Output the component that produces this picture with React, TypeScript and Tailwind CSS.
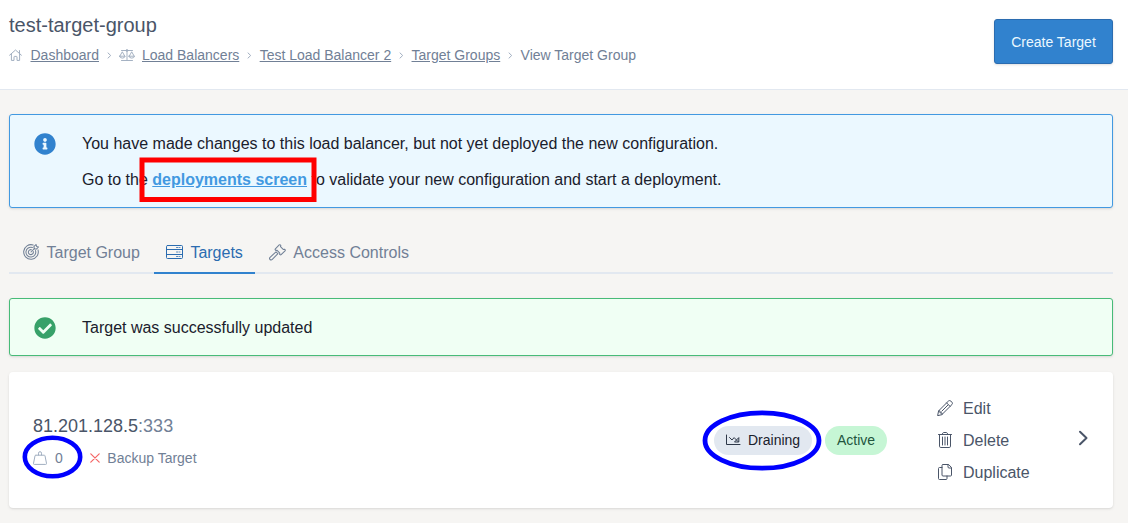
import type { ReactNode } from "react";
import { FaCheckCircle, FaInfoCircle } from "react-icons/fa";

type IconProps = { className: string; box?: string; width?: number; children: ReactNode };

function Icon({ className, box = "0 0 16 16", width = 1, children }: IconProps) {
  return (
    <svg
      className={`shrink-0 ${className}`}
      viewBox={box}
      fill="none"
      stroke="currentColor"
      strokeWidth={width}
      strokeLinecap="round"
      strokeLinejoin="round"
    >
      {children}
    </svg>
  );
}

function HomeIcon() {
  return (
    <Icon className="h-3 w-[13px] text-[#a0aec0]" box="0 0 13 12" width={1}>
      <path d="M.6 6.2 6.5 1l5.9 5.2M2.400 5v6.4h2.600V8q0-.6.6-.6h1.800q.6 0 .6.6v3.4h2.600V5M10.500 4.200V1.600" />
    </Icon>
  );
}

function ScaleIcon() {
  return (
    <Icon className="h-3 w-4 text-[#a0aec0]" box="0 0 16 12" width={0.95}>
      <path d="M2.500 1.500H13.500M8 .5v11M2.500 11.500h11M.8 7.200l2.500-4.400 2.500 4.400M10.200 7.200l2.500-4.400 2.500 4.400M.5 7.200h5.600q-.4 1.900-2.800 1.900T.5 7.200M9.900 7.200h5.600q-.4 1.900-2.800 1.900t-2.800-1.900" />
      <circle cx="8" cy="1.600" r=".9" />
    </Icon>
  );
}

function Crumb({ children }: { children: ReactNode }) {
  return (
    <>
      <a href="#" className="underline">{children}</a>
      <Icon className="ml-[7.500px] mr-[7.850px] mt-[2px] h-[7px] w-[5px] text-[#a0aec0]" box="0 0 5 7" width={1}>
        <path d="m1 .9 2.700 2.600L1 6.100" />
      </Icon>
    </>
  );
}

function TargetIcon() {
  return (
    <Icon className="h-4 w-4" width={1.05}>
      <path d="M10.200 1A7.300 7.300 0 1 0 15 5.900M9.400 3.500A4.900 4.900 0 1 0 12.500 6.600M8.400 5.700A2.500 2.500 0 1 0 10.300 7.600M8 8l3.600-3.600M11.200 4.800l-.3-2.200L13 .5l.6 1.900 1.900.6-2.100 2.100z" />
    </Icon>
  );
}

function ServerIcon() {
  return (
    <Icon className="h-4 w-[17px]" box="0 0 17 16">
      <rect x=".5" y="1.500" width="16" height="13" rx="1" />
      <path d="M.5 5.500h16M.5 10.500h16" />
      <path d="M10.500 3.500h1.600M13.500 3.500h.5M10.500 8h1.600M13.500 8h.5M10.500 12.500h1.600M13.500 12.500h.5" strokeWidth={0.8} />
    </Icon>
  );
}

function GavelIcon() {
  return (
    <Icon className="h-[17px] w-[17px]" width={1}>
      <path d="m6 4.600 3.600-3.700q.5-.5 1 0l.5.5-.3 1 2.800 2.800 1-.3.5.5q.5.500 0 1l-3.700 3.700q-.5.500-1 0l-.5-.5.300-1-2.800-2.800-1 .3-.4-.5q-.5-.5 0-1M7.600 8.400l-1-1L1 12.500q-1 1-.1 2.100 1.200 1 2.200-.1l5.300-5.400z" />
    </Icon>
  );
}

function Tab({ icon, label, active = false }: { icon: ReactNode; label: string; active?: boolean }) {
  return (
    <a
      href="#"
      className={`flex h-[42px] items-center border-b-2 pt-[2px] ${
        active ? "border-[#3182ce] px-3 text-[#2b6cb0]" : "border-[#e2e8f0] px-[14px] text-[#718096]"
      }`}
    >
      <span className="-mt-[2px]">{icon}</span>
      <span className="ml-[7.500px]">{label}</span>
    </a>
  );
}

function Action({ icon, label }: { icon: ReactNode; label: string }) {
  return (
    <a href="#" className="flex h-8 items-center">
      <span className="-mt-[2px] flex w-4 justify-center">{icon}</span>
      <span className="ml-[10px]">{label}</span>
    </a>
  );
}

export default function App() {
  return (
    <div className="relative h-[523px] overflow-hidden bg-[#f6f5f3] font-['Liberation_Sans',Arial,sans-serif] text-base text-[#1a202c]">
      <header className="flex h-[90px] items-start justify-between border-b border-[#e2e8f0] bg-white pl-[9px] pr-[15px]">
        <div>
          <h1 className="mt-[10px] text-xl leading-[30px] text-[#4a5568]">test-target-group</h1>
          <nav className="mt-1 flex h-[21px] items-center whitespace-nowrap text-sm text-[#718096]">
            <HomeIcon />
            <span className="w-[8.500px]" />
            <Crumb>Dashboard</Crumb>
            <span className="-ml-[0.350px]" />
            <ScaleIcon />
            <span className="w-[7px]" />
            <Crumb>Load Balancers</Crumb>
            <Crumb>Test Load Balancer 2</Crumb>
            <Crumb>Target Groups</Crumb>
            <span>View Target Group</span>
          </nav>
        </div>
        <button className="mt-[19px] h-[45px] w-[119px] rounded-[3px] border border-[#2b6cb0] bg-[#3182ce] text-sm text-[#ebf8ff] shadow-sm">
          Create Target
        </button>
      </header>

      <main className="pl-[9px] pr-[15px]">
        <section className="mt-6 flex h-[94px] rounded-[3px] border border-[#4299e1] bg-[#ebf8ff] pl-6 pt-[17px] shadow">
          <FaInfoCircle className="mt-[1px] h-[22px] w-[22px] shrink-0 text-[#3182ce]" />
          <div className="ml-[26px]">
            <p className="leading-6">You have made changes to this load balancer, but not yet deployed the new configuration.</p>
            <p className="mt-3 leading-6">
              Go to the{" "}
              <span className="relative">
                <a href="#" className="font-bold text-[#4299e1] underline">deployments screen</a>
                <svg className="pointer-events-none absolute -left-[13px] -top-[14px] h-[46px] w-[178px]" viewBox="0 0 178 46" fill="none">
                  <rect x="3" y="3" width="172" height="39.500" stroke="#ff0000" strokeWidth="5" />
                </svg>
              </span>{" "}
              to validate your new configuration and start a deployment.
            </p>
          </div>
        </section>

        <nav className="mt-6 flex h-[42px]">
          <Tab icon={<TargetIcon />} label="Target Group" />
          <Tab active icon={<ServerIcon />} label="Targets" />
          <Tab icon={<GavelIcon />} label="Access Controls" />
          <span className="flex-1 border-b-2 border-[#e2e8f0]" />
        </nav>

        <section className="mt-6 flex h-[58px] items-center rounded-[3px] border border-[#48bb78] bg-[#f0fff4] pl-6 pt-[2px] shadow">
          <FaCheckCircle className="h-[22px] w-[22px] shrink-0 text-[#38a169]" />
          <p className="ml-[26px]">Target was successfully updated</p>
        </section>

        <section className="mt-4 flex h-[136px] items-center rounded bg-white pl-6 shadow">
          <div className="flex-1">
            <h2 className="mt-px text-lg leading-[27px] text-[#4a5568]">
              81.201.128.5<span className="text-[#718096]">:333</span>
            </h2>
            <div className="mt-2 flex h-[21px] items-center text-sm text-[#718096]">
              <span className="relative flex items-center">
                <Icon className="h-[14px] w-[14px] text-[#a0aec0]" box="0 0 14 14" width={1}>
                  <path d="M2.800 4.200h8.400q.6 0 .8.600l1.500 7.600q.2 1-.8 1H1.300q-1 0-.8-1L2 4.800q.2-.6.8-.6M5.500 4V2.200Q5.500.7 7 .7t1.500 1.500V4" />
                </Icon>
                <span className="ml-2">0</span>
                <svg className="pointer-events-none absolute -left-[11px] -top-[13px] h-[44px] w-[61px]" viewBox="0 0 61 44" fill="none">
                  <ellipse cx="30.500" cy="22" rx="27.700" ry="19.200" stroke="#0000ff" strokeWidth="4.600" />
                </svg>
              </span>
              <Icon className="ml-[27px] h-[10px] w-[10px] text-[#f56565]" box="0 0 10 10" width={1.2}>
                <path d="m.8.800 8.400 8.400M9.200.800.800 9.200" />
              </Icon>
              <span className="ml-[7.500px]">Backup Target</span>
            </div>
          </div>
          <div className="flex items-center text-sm">
            <span className="relative flex h-[29px] w-[98px] items-center rounded-full bg-[#e2e8f0] pl-3">
              <Icon className="h-3 w-[15px] text-[#2d3748]" box="0 0 15 12" width={1}>
                <path d="M.5 1v9.500h13.500M3.500 3.500l2.500 2.500 2.100-2.400 4 4M12.800 4v4H8.900z" />
              </Icon>
              <span className="ml-[7px]">Draining</span>
              <svg className="pointer-events-none absolute -left-[12px] -top-[16px] h-[61px] w-[120px]" viewBox="0 0 120 61" fill="none">
                <ellipse cx="60" cy="30.500" rx="57" ry="27.700" stroke="#0000ff" strokeWidth="4.800" />
              </svg>
            </span>
            <span className="ml-[13px] flex h-[29px] w-[62px] items-center justify-center rounded-full bg-[#c6f6d5] text-[#22543d]">
              Active
            </span>
          </div>
          <div className="ml-[50px] mt-[2px] w-[130px] text-[#4a5568]">
            <Action
              label="Edit"
              icon={
                <Icon className="h-4 w-4" width={1}>
                  <path d="m.7 15.300.9-4.400L11.500 1q1.200-1 2.400.1l1 1q1.100 1.200.1 2.400L5.100 14.400zM9.600 2.900l3.500 3.500M1.600 10.900H3v2h2v1.500M4.800 11.200l6.100-6.100" />
                </Icon>
              }
            />
            <Action
              label="Delete"
              icon={
                <Icon className="h-4 w-[14px]" box="0 0 14 16" width={1}>
                  <path d="M.5 2.500h13M1.500 2.500v11.700q0 1.300 1.300 1.300h8.400q1.300 0 1.300-1.300V2.500M4 2.500l.8-1.400q.3-.6 1-.6h2.400q.7 0 1 .6l.8 1.400M4.500 5v8M7 5v8M9.500 5v8" />
                </Icon>
              }
            />
            <Action
              label="Duplicate"
              icon={
                <Icon className="h-4 w-4" width={1}>
                  <path d="M6 .5h5.600L14.500 3.500V11q0 1-1 1H6q-1 0-1-1V1.500q0-1 1-1M11 .5V3q0 1 1 1h2.500M5 3.500H2.500q-1 0-1 1v10q0 1 1 1H9q1 0 1-1V12" />
                </Icon>
              }
            />
          </div>
          <Icon className="-mt-1 ml-[11px] mr-[24px] h-4 w-[11px] text-[#4a5568]" box="0 0 11 16" width={2}>
            <path d="m2 1.800 6.500 6.200L2 14.200" />
          </Icon>
        </section>
      </main>
    </div>
  );
}
